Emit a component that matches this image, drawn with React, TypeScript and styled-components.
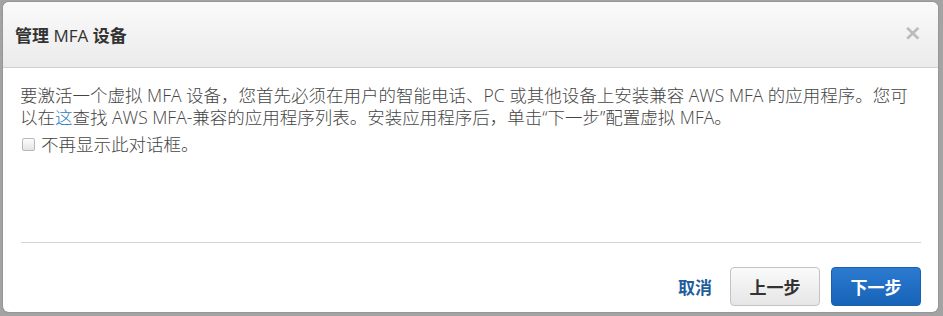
import styled, { createGlobalStyle } from "styled-components";

const GlobalStyle = createGlobalStyle`
  html, body {
    margin: 0;
    padding: 0;
    background: #a3a3a3;
  }
  body {
    font-family: "Open Sans", "Noto Sans CJK SC", "Noto Sans", sans-serif;
  }
`;

export default function App() {
  return (
    <>
      <GlobalStyle />
      <Backdrop>
        <Dialog>
          <Header>
            <Title>
              管理 <Latin>MFA</Latin> 设备
            </Title>
            <CloseButton aria-label="关闭">×</CloseButton>
          </Header>
          <Body>
            <Text>
              要激活一个虚拟 MFA 设备，您首先必须在用户的智能电话、PC 或其他设备上安装兼容 AWS MFA 的应用程序。您可以在
              <Link href="#">这</Link>查找 AWS MFA-兼容的应用程序列表。安装应用程序后，单击“下一步”配置虚拟 MFA。
            </Text>
            <CheckRow>
              <Check type="checkbox" />
              不再显示此对话框。
            </CheckRow>
          </Body>
          <Footer>
            <CancelLink href="#">取消</CancelLink>
            <Button>上一步</Button>
            <Button $primary>下一步</Button>
          </Footer>
        </Dialog>
      </Backdrop>
    </>
  );
}

const Backdrop = styled.div`
  width: 943px;
  height: 316px;
  box-sizing: border-box;
  padding: 2px 5px 0 3px;
  overflow: hidden;
`;

const Dialog = styled.div`
  width: 935px;
  height: 310px;
  background: #fff;
  border-radius: 6px;
  overflow: hidden;
  display: flex;
  flex-direction: column;
  box-shadow: 0 0 0 1px rgba(0, 0, 0, 0.08);
`;

const Header = styled.div`
  height: 66px;
  flex: none;
  box-sizing: border-box;
  padding: 0 16px 0 12px;
  display: flex;
  align-items: center;
  justify-content: space-between;
  background: linear-gradient(#fafafa, #ebebeb);
  border-bottom: 1px solid #cfcfcf;
`;

const Title = styled.h3`
  margin: 0;
  font-size: 17px;
  font-weight: 700;
  color: #333;
`;

const Latin = styled.span`
  font-weight: 400;
`;

const CloseButton = styled.span`
  font-family: "DejaVu Sans", sans-serif;
  font-size: 22px;
  font-weight: 700;
  color: #bbb;
  line-height: 1;
  margin-top: -4px;
`;

const Body = styled.div`
  flex: 1;
  padding: 16px 21px 0 17px;
  color: #444;
  font-size: 17.5px;
  font-weight: 300;
`;

const Text = styled.p`
  margin: 0;
  line-height: 22px;
`;

const Link = styled.a`
  color: #2a7cc0;
  text-decoration: none;
`;

const CheckRow = styled.label`
  display: flex;
  align-items: center;
  gap: 6px;
  margin-top: 6px;
  line-height: 20px;
`;

const Check = styled.input`
  appearance: none;
  width: 13px;
  height: 13px;
  margin: 0 0 0 2px;
  border: 1px solid #b8b8b8;
  border-radius: 2px;
  background: linear-gradient(#fdfdfd, #e4e4e4);
`;

const Footer = styled.div`
  margin: 0 17px 0 18px;
  border-top: 1px solid #d3d3d3;
  height: 70px;
  flex: none;
  display: flex;
  align-items: center;
  justify-content: flex-end;
  gap: 11px;
  padding-top: 24px;
  padding-bottom: 6px;
  box-sizing: border-box;
`;

const CancelLink = styled.a`
  color: #1f5e9c;
  font-weight: 700;
  font-size: 17px;
  text-decoration: none;
  margin-right: 7px;
`;

const Button = styled.button<{ $primary?: boolean }>`
  width: 90px;
  height: 39px;
  border-radius: 4px;
  font-family: inherit;
  font-size: 17px;
  font-weight: 700;
  cursor: pointer;
  color: ${(p) => (p.$primary ? "#fff" : "#333")};
  border: 1px solid ${(p) => (p.$primary ? "#1b5fad" : "#c3c3c3")};
  background: ${(p) =>
    p.$primary
      ? "linear-gradient(#2b7bd1, #1763b7)"
      : "linear-gradient(#fafafa, #e6e6e6)"};
`;
